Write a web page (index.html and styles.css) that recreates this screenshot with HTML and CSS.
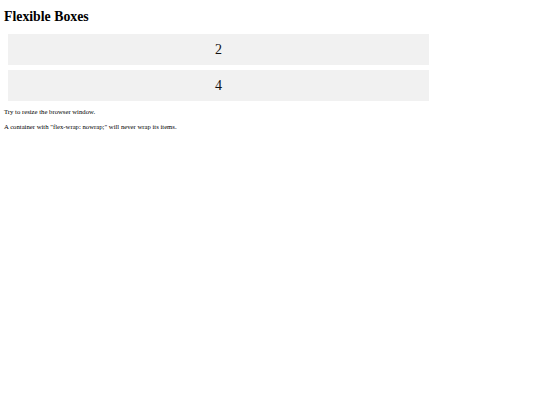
FILE: index.html
```html
<!DOCTYPE html>
<html>
<head>
<meta charset="utf-8">
<link rel="stylesheet" href="styles.css">
</head>
<body>
<h1 class="title">Flexible Boxes</h1>
<div class="flex-container">
  <div class="item">2</div>
  <div class="item">4</div>
</div>
<p class="note">Try to resize the browser window.</p>
<p class="note">A container with "flex-wrap: nowrap;" will never wrap its items.</p>
</body>
</html>
```
FILE: styles.css
```css
body {
  margin: 0;
  padding: 0 4px;
  font-family: "Liberation Serif", serif;
  color: #000;
  background: #fff;
}
.title {
  font-size: 13.8px;
  font-weight: bold;
  margin: 8px 0 0 0;
  line-height: 17px;
}
.flex-container {
  display: flex;
  flex-direction: column;
  gap: 5px;
  width: 421px;
  margin: 9px 0 0 4px;
}
.item {
  background: #f1f1f1;
  height: 31px;
  line-height: 31px;
  text-align: center;
  font-family: "Liberation Serif", serif;
  font-size: 14px;
  color: #111;
}
.note {
  font-size: 6.7px;
  line-height: 8px;
  margin: 7px 0 0 0;
}
.note + .note {
  margin-top: 7px;
}
```
